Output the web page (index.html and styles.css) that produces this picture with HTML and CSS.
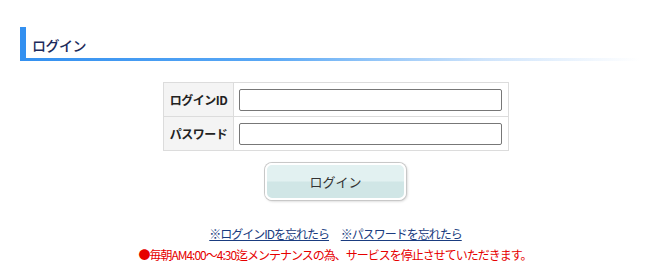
FILE: index.html
```html
<!DOCTYPE html>
<html lang="ja">
<head>
    <meta charset="UTF-8">
    <title>ログイン</title>
    <link rel="stylesheet" href="styles.css">
</head>
<body>
    <h2 class="page-title">ログイン</h2>

    <form class="login-form" onsubmit="return false;">
        <table class="login-table">
            <tr>
                <th>ログインID</th>
                <td><input type="text" name="login_id"></td>
            </tr>
            <tr>
                <th>パスワード</th>
                <td><input type="password" name="password"></td>
            </tr>
        </table>
        <div class="btn-wrap">
            <button type="submit" class="btn-login">ログイン</button>
        </div>
    </form>

    <p class="links">
        <a href="#">※ログインIDを忘れたら</a>
        <a href="#">※パスワードを忘れたら</a>
    </p>
    <p class="notice">●毎朝AM4:00～4:30迄メンテナンスの為、サービスを停止させていただきます。</p>
</body>
</html>
```

FILE: styles.css
```css
body {
    margin: 0;
    padding: 0;
    font-family: "Noto Sans CJK JP", "Liberation Sans", sans-serif;
    font-size: 12px;
    color: #333;
    background: #fff;
}
.page-title {
    margin: 27px 30px 0 20px;
    height: 32px;
    padding-left: 6px;
    border-left: 6px solid #3390f0;
    font-size: 14px;
    font-weight: 500;
    line-height: 36px;
    color: #1c2a5c;
    letter-spacing: -0.5px;
    position: relative;
}
.page-title::after {
    content: "";
    position: absolute;
    left: -6px;
    right: 0;
    bottom: -2px;
    height: 3px;
    background: linear-gradient(to right, #3390f0 0%, #5aa8f5 40%, #cfe4fb 75%, #fff 100%);
}
.login-form {
    margin-top: 23px;
}
.login-table {
    margin: 0 auto;
    border-collapse: collapse;
    position: relative;
    left: 1px;
}
.login-table th,
.login-table td {
    border: 1px solid #dcdcdc;
    height: 33px;
    padding: 0;
}
.login-table th {
    width: 69px;
    background: #f4f4f4;
    font-size: 12px;
    font-weight: bold;
    color: #222;
    text-align: center;
    letter-spacing: -0.5px;
}
.login-table td {
    padding: 0 6px 0 5px;
}
.login-table input {
    display: block;
    width: 263px;
    height: 22px;
    box-sizing: border-box;
    margin: 0;
    border: 1px solid #777;
    border-radius: 2px;
    font-size: 12px;
}
.btn-wrap {
    text-align: center;
    margin-top: 12px;
    padding-left: 1px;
}
.btn-login {
    width: 141px;
    height: 37px;
    border: 2px solid #fff;
    border-radius: 7px;
    box-shadow: 0 0 0 1px #c8c8c8, 1px 1px 3px rgba(0, 0, 0, 0.25);
    background: linear-gradient(to bottom, #e2f1f1 0%, #e2f1f1 48%, #d0e6e6 52%, #d0e6e6 100%);
    font-family: "Noto Sans CJK JP", "Liberation Sans", sans-serif;
    font-size: 13px;
    color: #333;
    cursor: pointer;
}
.links {
    margin: 26px 0 0;
    text-align: center;
    font-size: 12px;
    line-height: 16px;
    padding-left: 1px;
    letter-spacing: -1px;
}
.links a {
    color: #1a3c80;
    text-decoration: underline;
    margin: 0 5px;
}
.notice {
    margin: 5px 0 0;
    text-align: center;
    font-size: 12px;
    line-height: 16px;
    color: #e60000;
    letter-spacing: -1px;
}
```
